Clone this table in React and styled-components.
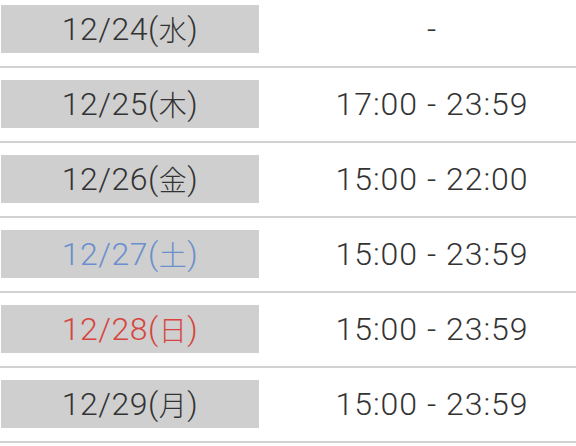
import React from 'react';
import styled, { createGlobalStyle } from 'styled-components';

const GlobalStyle = createGlobalStyle`
  body {
    margin: 0;
    background: #fff;
    font-family: Roboto, "Noto Sans CJK JP", sans-serif;
    color: #333;
  }
`;

const Table = styled.div`
  margin-top: -7px;
`;

const Row = styled.div`
  display: grid;
  grid-template-columns: 1fr 1fr;
  align-items: center;
  padding: 12px 0 13px;
  border-bottom: 2px solid #d2d2d2;
`;

const DateCell = styled.div`
  width: 258px;
  height: 48px;
  margin-left: 1px;
  background: #cfcfcf;
  display: flex;
  align-items: center;
  justify-content: center;
  font-size: 32px;
  font-weight: 300;
  letter-spacing: 0.5px;
  color: ${props => props.tone === 'sat' ? '#6b8fcd' : props.tone === 'sun' ? '#d6453f' : '#333'};
`;

// 曜日の漢字は数字と同じくらいの高さに
const Weekday = styled.span`
  font-size: 28px;
`;

const TimeCell = styled.div`
  text-align: center;
  font-size: 32px;
  font-weight: 300;
  letter-spacing: 1px;
  line-height: 48px;
`;

const schedule = [
  { date: '12/24', day: '水', time: '-' },
  { date: '12/25', day: '木', time: '17:00 - 23:59' },
  { date: '12/26', day: '金', time: '15:00 - 22:00' },
  { date: '12/27', day: '土', time: '15:00 - 23:59', tone: 'sat' },
  { date: '12/28', day: '日', time: '15:00 - 23:59', tone: 'sun' },
  { date: '12/29', day: '月', time: '15:00 - 23:59' },
];

const App = () => {
  return (
    <>
      <GlobalStyle />
      <Table>
        {schedule.map((item) => (
          <Row key={item.date}>
            <DateCell tone={item.tone}>
              {item.date}(<Weekday>{item.day}</Weekday>)
            </DateCell>
            <TimeCell>{item.time}</TimeCell>
          </Row>
        ))}
      </Table>
    </>
  );
};

export default App;
